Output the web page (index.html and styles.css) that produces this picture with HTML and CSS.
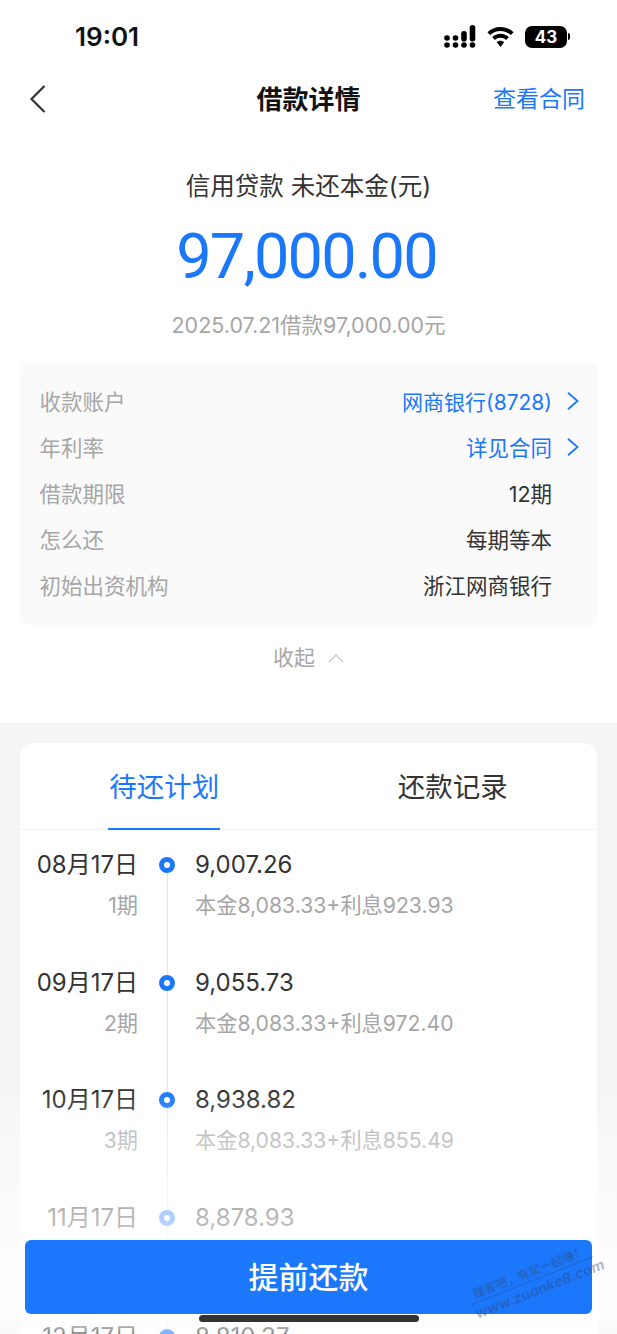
FILE: index.html
```html
<!DOCTYPE html>
<html>
<head>
  <meta charset="utf-8">
  <title>借款详情</title>
  <link rel="stylesheet" href="styles.css">
</head>
<body>
  <div class="page">
    <div class="top">
      <div class="status-bar">
        <span class="time">19:01</span>
        <div class="status-icons">
          <svg width="32" height="23" viewBox="0 0 32 23" fill="#000">
            <circle cx="3" cy="20" r="2.800"/><circle cx="11.500" cy="20" r="2.800"/><circle cx="20" cy="20" r="2.800"/><circle cx="28.500" cy="20" r="2.800"/>
            <circle cx="3" cy="13" r="2.800"/><circle cx="11.500" cy="13" r="2.800"/>
            <rect x="17.200" y="6" width="5.600" height="10.500" rx="2.800"/><rect x="25.700" y="0" width="5.600" height="16.500" rx="2.800"/>
          </svg>
          <svg width="27" height="20" viewBox="0 0 25 19" preserveAspectRatio="none" fill="#000">
            <path d="M12.500 0C7.800 0 3.600 1.900.4 5l2.500 2.700C5.400 5.300 8.800 3.800 12.500 3.800s7.100 1.500 9.600 3.900L24.600 5C21.400 1.900 17.200 0 12.500 0z"/>
            <path d="M12.500 6.500c-3 0-5.700 1.200-7.700 3.100l2.500 2.700c1.400-1.300 3.200-2.100 5.200-2.100s3.800.8 5.200 2.100l2.500-2.700c-2-1.900-4.700-3.100-7.700-3.100z"/>
            <path d="M12.500 13c-1.300 0-2.500.5-3.400 1.400l3.400 4.600 3.400-4.600c-.9-.9-2.100-1.400-3.400-1.400z"/>
          </svg>
          <div class="battery"><span class="battery-level">43</span><i class="battery-cap"></i></div>
        </div>
      </div>

      <div class="nav">
        <svg class="back" width="18" height="30" viewBox="0 0 18 30" fill="none" stroke="#333" stroke-width="2.200">
          <path d="M15.500 2 L2.500 15 L15.500 28"/>
        </svg>
        <span class="nav-title">借款详情</span>
        <span class="nav-link">查看合同</span>
      </div>

      <div class="summary">
        <div class="summary-label">信用贷款 未还本金(元)</div>
        <div class="summary-amount">97,000.00</div>
        <div class="summary-note">2025.07.21借款97,000.00元</div>
      </div>

      <div class="info">
        <div class="info-row">
          <span class="info-key">收款账户</span>
          <span class="info-value link account">网商银行(8728)</span>
          <svg class="chevron" width="12" height="18" viewBox="0 0 12 18" fill="none" stroke="#1b78fd" stroke-width="1.800"><path d="M1 .8 L10.500 9 L1 17.200"/></svg>
        </div>
        <div class="info-row">
          <span class="info-key">年利率</span>
          <span class="info-value link">详见合同</span>
          <svg class="chevron" width="12" height="18" viewBox="0 0 12 18" fill="none" stroke="#1b78fd" stroke-width="1.800"><path d="M1 .8 L10.500 9 L1 17.200"/></svg>
        </div>
        <div class="info-row">
          <span class="info-key">借款期限</span>
          <span class="info-value">12期</span>
        </div>
        <div class="info-row">
          <span class="info-key">怎么还</span>
          <span class="info-value">每期等本</span>
        </div>
        <div class="info-row">
          <span class="info-key">初始出资机构</span>
          <span class="info-value">浙江网商银行</span>
        </div>
      </div>

      <div class="collapse">
        <span>收起</span>
        <svg width="16" height="10" viewBox="0 0 16 10" fill="none" stroke="#c8c8c8" stroke-width="1.300"><path d="M1 9 L8 2 L15 9"/></svg>
      </div>
    </div>

    <div class="lower">
      <div class="card">
        <div class="tabs">
          <div class="tab active"><span class="tab-label">待还计划</span></div>
          <div class="tab"><span class="tab-label">还款记录</span></div>
        </div>

        <div class="plan">
          <div class="plan-row">
            <div class="plan-date"><div class="date">08月17日</div><div class="period">1期</div></div>
            <div class="plan-axis"><i class="dot"></i></div>
            <div class="plan-main"><div class="amount">9,007.26</div><div class="detail">本金8,083.33+利息923.93</div></div>
          </div>
          <div class="plan-row">
            <div class="plan-date"><div class="date">09月17日</div><div class="period">2期</div></div>
            <div class="plan-axis"><i class="dot"></i></div>
            <div class="plan-main"><div class="amount">9,055.73</div><div class="detail">本金8,083.33+利息972.40</div></div>
          </div>
          <div class="plan-row">
            <div class="plan-date"><div class="date">10月17日</div><div class="period">3期</div></div>
            <div class="plan-axis"><i class="dot"></i></div>
            <div class="plan-main"><div class="amount">8,938.82</div><div class="detail">本金8,083.33+利息855.49</div></div>
          </div>
          <div class="plan-row">
            <div class="plan-date"><div class="date">11月17日</div></div>
            <div class="plan-axis"><i class="dot"></i></div>
            <div class="plan-main"><div class="amount">8,878.93</div></div>
          </div>
          <div class="plan-row">
            <div class="plan-date"><div class="date">12月17日</div></div>
            <div class="plan-axis"><i class="dot"></i></div>
            <div class="plan-main"><div class="amount">8,810.37</div></div>
          </div>
        </div>
      </div>
    </div>

    <div class="fade"></div>
    <div class="repay">提前还款</div>
    <div class="home-bar"></div>
    <div class="watermark"><div class="watermark-name">赚客吧，有奖一起赚！</div><div class="watermark-url">www.zuanke8.com</div></div>
  </div>
</body>
</html>
```

FILE: styles.css
```css
html, body {
  margin: 0;
  padding: 0;
}

body {
  font-family: Inter, "Noto Sans CJK SC", sans-serif;
  background-color: #ffffff;
  color: #333333;
}

.page {
  position: relative;
  width: 617px;
  height: 1334px;
  overflow: hidden;
  display: flex;
  flex-direction: column;
}

.top {
  height: 723px;
  flex-shrink: 0;
}

/* Status bar */
.status-bar {
  height: 73px;
  display: flex;
  justify-content: space-between;
  align-items: center;
  padding: 0 47px 0 75px;
}

.time {
  font-size: 26px;
  font-weight: 600;
  color: #111111;
}

.status-icons {
  display: flex;
  align-items: center;
  gap: 11px;
}

.battery {
  display: flex;
  align-items: center;
  gap: 1px;
}

.battery-level {
  width: 42px;
  height: 22px;
  line-height: 22px;
  border-radius: 7px;
  background-color: #000000;
  color: #ffffff;
  font-size: 17px;
  font-weight: 700;
  text-align: center;
}

.battery-cap {
  width: 2px;
  height: 7px;
  background-color: #000000;
  border-radius: 0 2px 2px 0;
}

/* Nav */
.nav {
  height: 48px;
  padding: 0 32px 4px 29px;
  display: flex;
  align-items: center;
  justify-content: space-between;
  position: relative;
}

.back {
  margin-top: 4px;
}

.nav-title {
  position: absolute;
  left: 0;
  right: 0;
  text-align: center;
  font-size: 26px;
  font-weight: 700;
  color: #111111;
}

.nav-link {
  font-size: 23px;
  color: #1b78fd;
}

/* Summary */
.summary {
  padding-top: 44px;
  text-align: center;
}

.summary-label {
  font-size: 24.500px;
  line-height: 34px;
  color: #333333;
}

.summary-amount {
  font-family: Roboto, "Liberation Sans", sans-serif;
  font-size: 63px;
  letter-spacing: -1.800px;
  line-height: 80px;
  margin-top: 14px;
  padding-right: 4px;
  color: #1b78fd;
}

.summary-note {
  font-size: 21.500px;
  line-height: 28px;
  margin-top: 14px;
  color: #a6a6a6;
}

/* Info panel */
.info {
  margin: 24px 20px 0;
  padding: 15px 18px 16px 19.500px;
  background-color: #fafafa;
  border-radius: 8px;
  box-sizing: border-box;
  height: 262px;
  display: flex;
  flex-direction: column;
}

.info-row {
  height: 45.800px;
  flex-shrink: 0;
  display: flex;
  align-items: center;
  font-size: 21.500px;
  padding-right: 27px;
  position: relative;
}

.info-key {
  flex: 1;
  color: #a6a6a6;
}

.info-value {
  color: #333333;
}

.info-value.link {
  color: #1b78fd;
}

.info-value.account {
  font-size: 21px;
}

.chevron {
  position: absolute;
  right: 0;
  top: 14px;
}

.collapse {
  margin-top: 16px;
  display: flex;
  justify-content: center;
  align-items: center;
  gap: 13px;
  font-size: 21px;
  line-height: 34px;
  color: #a6a6a6;
}

/* Lower section */
.lower {
  flex: 1;
  background-color: #f5f5f5;
  padding: 20px 20px 0;
}

.card {
  background-color: #ffffff;
  border-radius: 14px 14px 0 0;
  height: 100%;
}

.tabs {
  display: flex;
  height: 86px;
  border-bottom: 1px solid #f2f2f2;
}

.tab {
  flex: 1;
  display: flex;
  justify-content: center;
}

.tab-label {
  font-size: 27.500px;
  line-height: 88px;
  color: #333333;
  height: 87px;
  box-sizing: border-box;
  padding: 0 1px;
}

.tab.active .tab-label {
  color: #1b78fd;
  border-bottom: 2px solid #1b78fd;
}

.plan {
  padding-top: 17px;
}

.plan-row {
  display: flex;
  height: 117.500px;
}

.plan-row:last-child {
  margin-top: 2px;
}

.plan-date {
  width: 118px;
  text-align: right;
}

.date, .amount {
  font-size: 24px;
  line-height: 36px;
  color: #333333;
}

.period, .detail {
  font-size: 21.200px;
  line-height: 30px;
  margin-top: 7px;
  color: #a6a6a6;
}

.plan-axis {
  width: 57px;
  position: relative;
  flex-shrink: 0;
}

.plan-axis::after {
  content: "";
  position: absolute;
  left: 28.500px;
  top: 18px;
  width: 1px;
  height: 117.500px;
  background-color: #e6e6e6;
}

.dot {
  position: absolute;
  left: 21px;
  top: 10px;
  width: 16px;
  height: 16px;
  box-sizing: border-box;
  border: 5px solid #1b78fd;
  border-radius: 50%;
  background-color: #ffffff;
  z-index: 1;
}

/* Overlays */
.fade {
  position: absolute;
  left: 0;
  right: 0;
  top: 1090px;
  height: 244px;
  background: linear-gradient(rgba(255, 255, 255, 0), rgba(255, 255, 255, 0.35) 20%, rgba(255, 255, 255, 0.65) 52%, rgba(255, 255, 255, 0.95) 92%, rgba(255, 255, 255, 0.4));
  z-index: 2;
}

.repay {
  position: absolute;
  left: 25px;
  top: 1240px;
  width: 567px;
  height: 74px;
  line-height: 74px;
  background-color: #1b78fd;
  border-radius: 6px;
  color: #ffffff;
  font-size: 30px;
  font-weight: 500;
  text-align: center;
  z-index: 3;
}

.home-bar {
  position: absolute;
  left: 199px;
  top: 1315px;
  width: 220px;
  height: 7px;
  background-color: #333333;
  border-radius: 4px;
  z-index: 3;
}

.watermark {
  position: absolute;
  left: 468px;
  top: 1264px;
  width: 130px;
  transform: rotate(-21.500deg);
  color: rgba(50, 70, 110, 0.4);
  font-weight: 700;
  text-align: center;
  white-space: nowrap;
  z-index: 4;
}

.watermark-name {
  font-size: 12px;
  line-height: 16px;
  border-bottom: 1px solid rgba(50, 70, 110, 0.35);
}

.watermark-url {
  font-size: 14.500px;
  line-height: 19px;
  font-style: italic;
}
```
